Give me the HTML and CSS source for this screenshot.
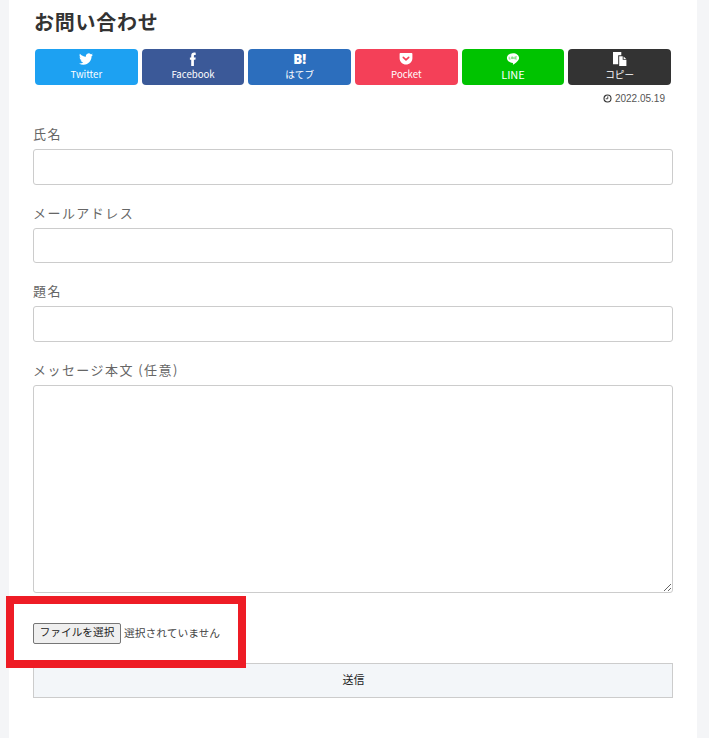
FILE: index.html
```html
<!DOCTYPE html>
<html lang="ja">
<head>
<meta charset="utf-8">
<title>お問い合わせ</title>
<link rel="stylesheet" href="styles.css">
</head>
<body>
<main class="page">
  <h1 class="title">お問い合わせ</h1>
  <div class="share">
    <a class="sbtn tw"><svg class="ico" viewBox="0 0 24 24" width="14" height="14"><path fill="#fff" d="M23.953 4.57a10 10 0 01-2.825.775 4.958 4.958 0 002.163-2.723c-.951.555-2.005.959-3.127 1.184a4.92 4.92 0 00-8.384 4.482C7.69 8.095 4.067 6.13 1.64 3.162a4.822 4.822 0 00-.666 2.475c0 1.71.87 3.213 2.188 4.096a4.904 4.904 0 01-2.228-.616v.06a4.923 4.923 0 003.946 4.827 4.996 4.996 0 01-2.212.085 4.936 4.936 0 004.604 3.417 9.867 9.867 0 01-6.102 2.105c-.39 0-.779-.023-1.17-.067a13.995 13.995 0 007.557 2.209c9.053 0 13.998-7.496 13.998-13.985 0-.21 0-.42-.015-.63A9.935 9.935 0 0024 4.59z"/></svg><span class="lbl">Twitter</span></a>
    <a class="sbtn fb"><svg class="ico" viewBox="0 0 14 14" width="14" height="14"><path fill="#fff" d="M5.2 14V7.8H3.9V5.4h1.3V3.7C5.2 1.7 6.3.6 8.2.6c.6 0 1.1 0 1.5.1v2.2h-.9c-.7 0-.9.3-.9.9v1.6h1.8l-.3 2.4H7.9V14z"/></svg><span class="lbl">Facebook</span></a>
    <a class="sbtn hb"><span class="ico hbm">B!</span><span class="lbl">はてブ</span></a>
    <a class="sbtn pk"><svg class="ico" viewBox="0 0 14 14" width="14" height="14"><path fill="#fff" d="M1.4 1h11.2c.4 0 .8.4.8.8v4.4c0 3.4-2.900 6.300-6.400 6.300S.6 9.600.6 6.200V1.800c0-.4.4-.8.8-.8z"/><path fill="none" stroke="#f44058" stroke-width="1.600" stroke-linecap="round" stroke-linejoin="round" d="M4.300 5.300 7 7.900l2.700-2.600"/></svg><span class="lbl">Pocket</span></a>
    <a class="sbtn ln"><svg class="ico" viewBox="0 0 14 14" width="14" height="14"><path fill="#fff" d="M7 1.200c3.400 0 6.100 2.100 6.100 4.800 0 2.400-3.300 5-5.700 6.600-.5.300-.6-.1-.5-.6l.1-1.100C3.500 10.700.9 8.600.9 6 .9 3.300 3.600 1.200 7 1.200z"/><path fill="none" stroke="#7fdc7f" stroke-width=".9" d="M3.200 4.700v2.400h1.300M5.400 4.700v2.400M6.500 7.100V4.700l1.700 2.400V4.700M10.800 4.700H9.400v2.400h1.400M9.400 5.900h1.200"/></svg><span class="lbl lbl-lg">LINE</span></a>
    <a class="sbtn cp"><svg class="ico" viewBox="0 0 14 14" width="14" height="14"><path fill="#fff" d="M0 0h8.300v3.200H5.200v9H0z"/><path fill="#fff" d="M6.200 4.200h3.500v3.500h3.700v6.300H6.200z"/><path fill="#fff" d="M10.600 4.500l2.600 2.400h-2.600z"/></svg><span class="lbl">コピー</span></a>
  </div>
  <div class="date"><svg class="clock" viewBox="0 0 10 10" width="9" height="9"><circle cx="5" cy="5" r="3.900" fill="none" stroke="#333" stroke-width="1.200"/><path d="M5.300 2.700v2.600H3" fill="none" stroke="#333" stroke-width="1"/></svg><span>2022.05.19</span></div>
  <form class="form">
    <div class="field"><label class="label">氏名</label><input class="input" type="text"></div>
    <div class="field"><label class="label">メールアドレス</label><input class="input" type="text"></div>
    <div class="field"><label class="label">題名</label><input class="input" type="text"></div>
    <div class="field"><label class="label">メッセージ本文 (任意)</label><textarea class="input area"></textarea></div>
    <div class="file"><button class="filebtn" type="button">ファイルを選択</button><span class="filename">選択されていません</span></div>
    <button class="submit" type="button">送信</button>
  </form>
  <div class="highlight"></div>
</main>
</body>
</html>
```
FILE: styles.css
```css
* { box-sizing: border-box; }
html, body { height: 100%; }
body {
  margin: 0;
  background: #f4f5f7;
  color: #333;
  font-family: "Noto Sans CJK JP", "Noto Sans", sans-serif;
  overflow: hidden;
}
.page {
  position: relative;
  width: 688px;
  height: 738px;
  margin-left: 9px;
  padding: 0 24px;
  background: #fff;
}
.title {
  margin: 0;
  padding: 8px 0 0 1px;
  height: 49px;
  font-size: 20px;
  line-height: 28px;
  font-weight: 700;
  letter-spacing: .75px;
  color: #333;
}
.share {
  display: grid;
  grid-template-columns: repeat(6, 1fr);
  gap: 4px;
  margin: 0 2px;
}
.sbtn {
  display: flex;
  flex-direction: column;
  align-items: center;
  height: 36px;
  padding-top: 3px;
  border-radius: 4px;
  color: #fff;
}
.tw { background: #1da1f2; }
.fb { background: #3b5998; }
.hb { background: #2c6ebd; }
.pk { background: #f44058; }
.ln { background: #00c300; }
.cp { background: #333; }
.ico { display: block; height: 14px; flex: none; }
.hbm {
  font-family: "Open Sans", sans-serif;
  font-weight: 800;
  font-size: 13.500px;
  line-height: 14px;
}
.lbl {
  margin-top: 1px;
  font-family: "Noto Sans CJK JP", sans-serif;
  font-size: 9.600px;
  line-height: 14px;
}
.lbl-lg { font-size: 11px; }
.date {
  display: flex;
  justify-content: flex-end;
  align-items: center;
  gap: 3px;
  height: 14px;
  margin-top: 6px;
  padding-right: 8px;
  font-family: "Liberation Sans", sans-serif;
  font-size: 10px;
  color: #555;
}
.form { display: block; margin-top: 15px; }
.field { display: block; margin-bottom: 14px; }
.label {
  display: block;
  height: 29px;
  font-size: 13px;
  line-height: 28px;
  letter-spacing: 1.450px;
  color: #666;
}
.input {
  display: block;
  width: 100%;
  height: 35.500px;
  border: 1px solid #ccc;
  border-radius: 3px;
  background: #fff;
  padding: 4px 8px;
  margin: 0;
  font: inherit;
}
.area { height: 208px; resize: vertical; }
.file {
  display: flex;
  align-items: center;
  gap: 3px;
  height: 21px;
  margin-top: 30px;
}
.filebtn {
  width: 88px;
  height: 21px;
  padding: 0 0 2px;
  background: #efefef;
  border: 1px solid #767676;
  border-radius: 2px;
  color: #222;
  font-family: inherit;
  font-size: 10.670px;
  line-height: 16px;
}
.filename {
  padding-bottom: 2px;
  font-size: 10.750px;
  color: #444;
}
.submit {
  display: block;
  width: 100%;
  height: 35px;
  margin-top: 19px;
  padding: 0 0 2px 1px;
  background: #f3f6f9;
  border: 1px solid #ccc;
  color: #222;
  font-family: inherit;
  font-size: 11px;
}
.highlight {
  position: absolute;
  left: -3px;
  top: 596px;
  width: 240px;
  height: 72px;
  border: 8px solid #ee1c25;
}
```
